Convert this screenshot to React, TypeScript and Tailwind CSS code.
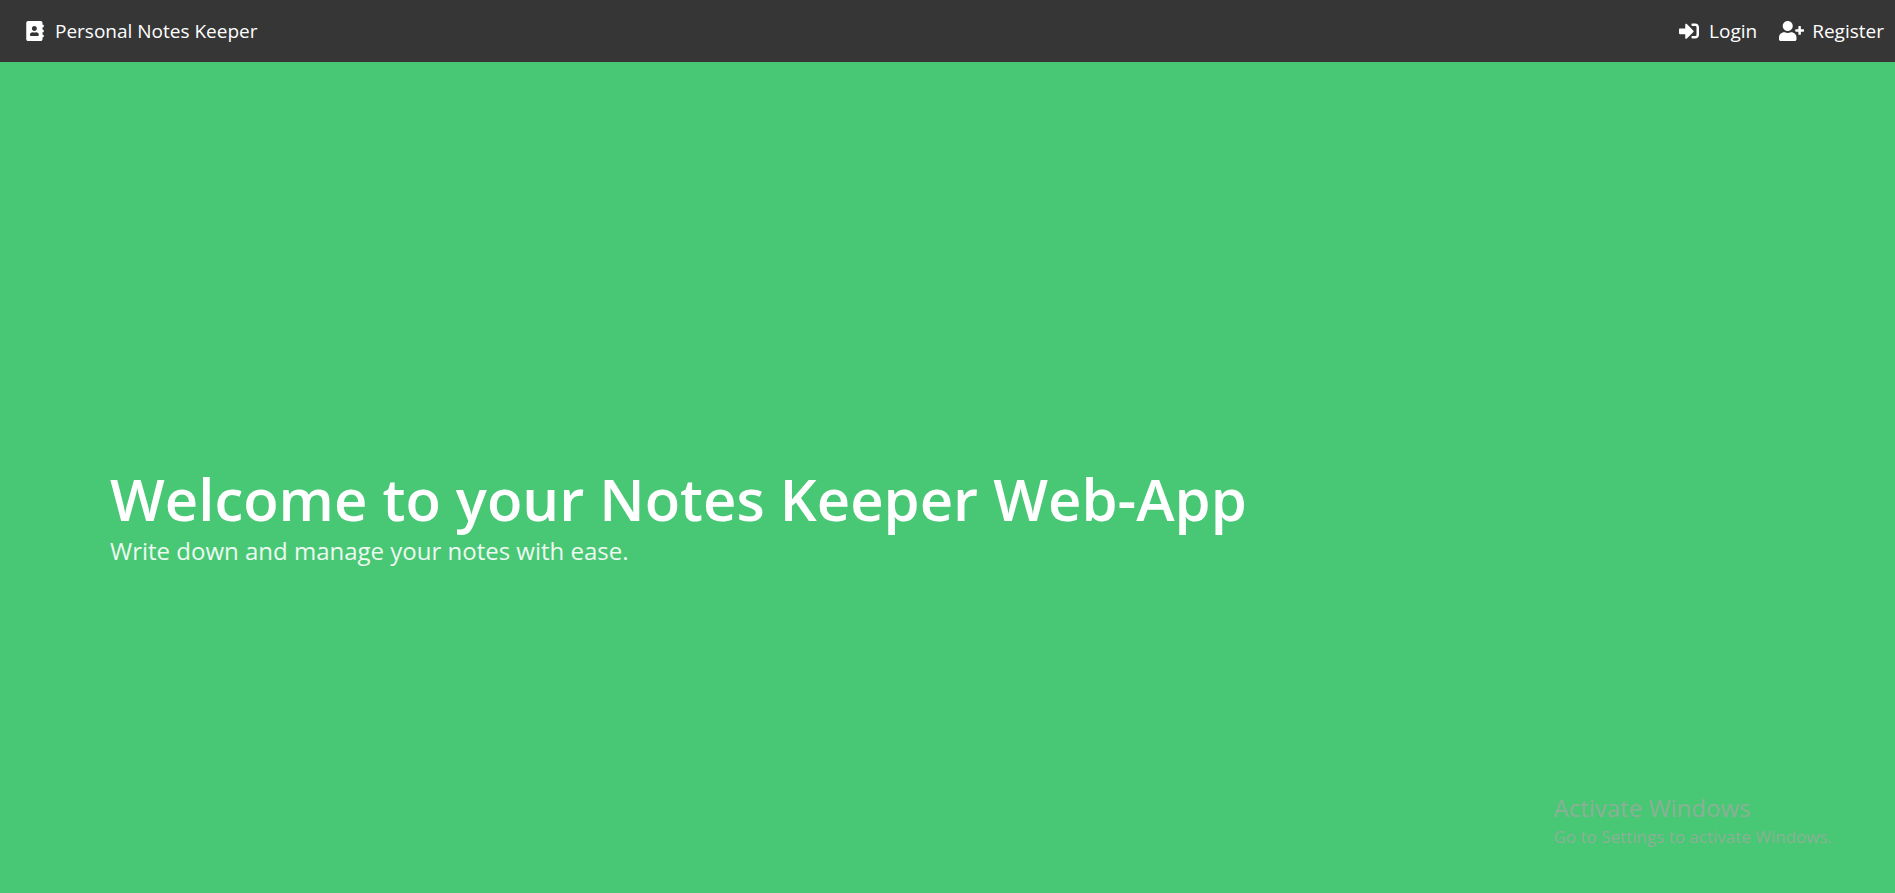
import { FaAddressBook, FaSignInAlt, FaUserPlus } from "react-icons/fa";

export default function App() {
  return (
    <div className="flex min-h-screen flex-col bg-[#48c774] font-['Open_Sans','Noto_Sans',sans-serif] text-white">
      <nav className="flex min-h-[62px] items-center justify-between bg-[#363636] pr-[11px] pb-px pl-[26px] text-[19px] leading-7">
        <a href="#" className="flex items-center gap-[11px]">
          <FaAddressBook className="h-5 w-[18px]" aria-hidden="true" />
          <span>Personal Notes Keeper</span>
        </a>
        <div className="flex items-center gap-[22px]">
          <a href="#login" className="flex items-center gap-2.5">
            <FaSignInAlt className="size-5" aria-hidden="true" />
            <span>Login</span>
          </a>
          <a href="#register" className="flex items-center gap-2">
            <FaUserPlus className="h-5 w-[25px]" aria-hidden="true" />
            <span>Register</span>
          </a>
        </div>
      </nav>

      <main className="flex flex-1 flex-col justify-center px-[110px] pt-[78px]">
        <h1 className="text-[58px] leading-[68px] font-semibold">
          Welcome to your Notes Keeper Web-App
        </h1>
        <p className="text-[24px] leading-9 text-white/90">
          Write down and manage your notes with ease.
        </p>
      </main>

      <aside className="fixed right-[58px] bottom-11 min-w-[283px] text-[#8fae98]">
        <p className="text-[24px] leading-[34px]">Activate Windows</p>
        <p className="text-[17px] leading-6">Go to Settings to activate Windows.</p>
      </aside>
    </div>
  );
}
